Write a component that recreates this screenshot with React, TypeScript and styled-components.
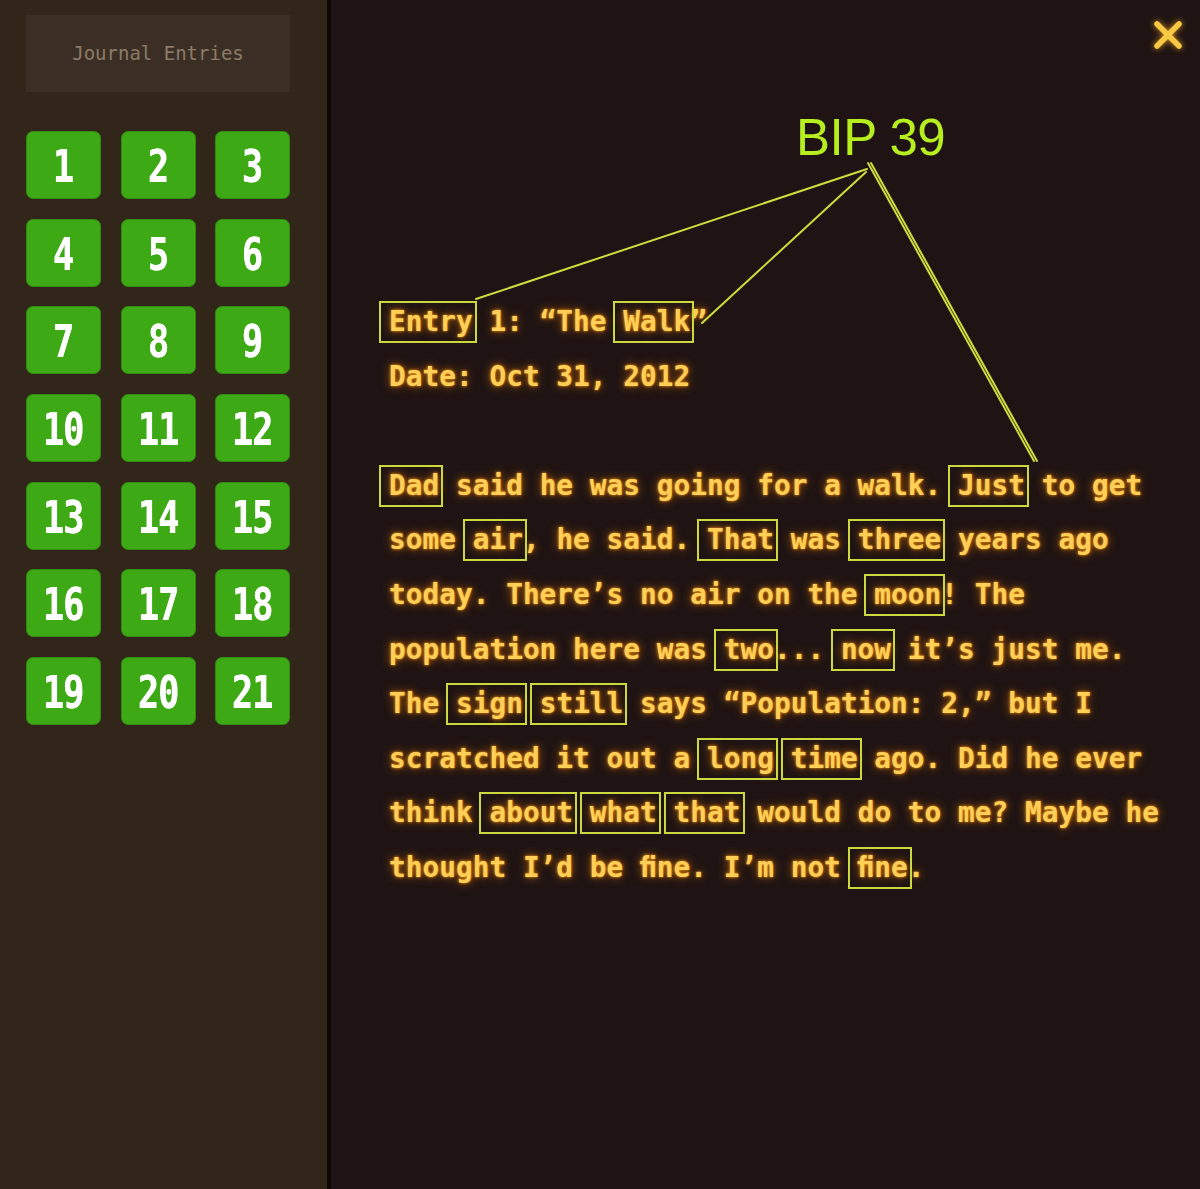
import React from "react";
import styled, { createGlobalStyle } from "styled-components";

const Global = createGlobalStyle`
  html, body { margin: 0; padding: 0; background: #1f1413; }
  * { box-sizing: border-box; }
`;

const Page = styled.div`
  display: flex;
  width: 1200px;
  height: 1189px;
  overflow: hidden;
  background: #1f1413;
`;

const Sidebar = styled.aside`
  width: 331px;
  flex: none;
  background: #32261b;
  border-right: 4px solid #0c0806;
  padding: 15px 37px 0 26px;
  display: flex;
  flex-direction: column;
`;

const SideHeader = styled.div`
  height: 77px;
  background: #3b2f25;
  display: flex;
  align-items: center;
  justify-content: center;
  font-family: "DejaVu Sans Mono", "Liberation Mono", monospace;
  font-size: 19px;
  color: #8c7b67;
  padding-bottom: 1px;
`;

const Grid = styled.div`
  margin-top: 39px;
  display: grid;
  grid-template-columns: repeat(3, 75px);
  grid-auto-rows: 68px;
  column-gap: 19.5px;
  row-gap: 19.7px;
`;

const EntryButton = styled.button`
  border: 1px solid #2f8a12;
  border-radius: 7px;
  background: #3da915;
  color: #ffffff;
  display: flex;
  align-items: center;
  justify-content: center;
  padding: 0;
  cursor: pointer;
  font-family: "DejaVu Sans Mono", "Liberation Mono", monospace;
  font-weight: 700;
  font-size: 45px;
  line-height: 1;
`;

const Digits = styled.span`
  display: inline-block;
  transform: scaleX(0.78);
  margin-top: 3px;
  letter-spacing: -1px;
  text-shadow: 0.6px 0 0 #ffffff;
`;

const Main = styled.main`
  position: relative;
  flex: 1;
  padding: 295px 0 0 58px;
`;

const CloseButton = styled.button`
  position: absolute;
  top: 19px;
  right: 16px;
  width: 32px;
  height: 32px;
  padding: 0;
  border: none;
  background: transparent;
  cursor: pointer;
  filter: drop-shadow(0 0 3px rgba(255, 170, 30, 0.8));
  svg { display: block; }
`;

const Annotation = styled.div`
  position: absolute;
  inset: 0;
  pointer-events: none;
`;

const BipLabel = styled.div`
  position: absolute;
  left: 465px;
  top: 112px;
  font-family: "Liberation Sans", Arial, sans-serif;
  font-size: 51px;
  line-height: 1;
  color: #b6ee1f;
  letter-spacing: -0.5px;
`;

const Leaders = styled.svg`
  position: absolute;
  left: 0;
  top: 0;
  width: 100%;
  height: 100%;
  overflow: visible;
`;

const Journal = styled.div`
  font-family: "DejaVu Sans Mono", "Liberation Mono", monospace;
  font-weight: 700;
  font-size: 27.8px;
  color: #ffcf58;
  text-shadow: 0 0 3px rgba(255, 160, 20, 0.95), 0 0 10px rgba(255, 130, 0, 0.7);
`;

const Line = styled.div`
  height: 54.6px;
  line-height: 54.6px;
  white-space: pre;
`;

const Marked = styled.span`
  position: relative;
  &::after {
    content: "";
    position: absolute;
    top: -4px;
    bottom: -5px;
    left: -10px;
    right: -4px;
    border: 2px solid #ccd93e;
    pointer-events: none;
  }
`;

const lines = [
  "[Entry] 1: “The [Walk]”",
  "Date: Oct 31, 2012",
  "",
  "[Dad] said he was going for a walk. [Just] to get",
  "some [air], he said. [That] was [three] years ago",
  "today. There’s no air on the [moon]! The",
  "population here was [two]... [now] it’s just me.",
  "The [sign] [still] says “Population: 2,” but I",
  "scratched it out a [long] [time] ago. Did he ever",
  "think [about] [what] [that] would do to me? Maybe he",
  "thought I’d be ﬁne. I’m not [ﬁne].",
];

function renderLine(text: string) {
  return text.split(/(\[[^\]]+\])/).map((part, i) => {
    if (part.startsWith("[") && part.endsWith("]")) {
      return <Marked key={i}>{part.slice(1, -1)}</Marked>;
    }
    return <React.Fragment key={i}>{part}</React.Fragment>;
  });
}

export default function App() {
  const entries = Array.from({ length: 21 }, (_, i) => i + 1);
  return (
    <>
      <Global />
      <Page>
        <Sidebar>
          <SideHeader>Journal Entries</SideHeader>
          <Grid>
            {entries.map((n) => (
              <EntryButton key={n}>
                <Digits>{n}</Digits>
              </EntryButton>
            ))}
          </Grid>
        </Sidebar>
        <Main>
          <Journal>
            {lines.map((l, i) => (
              <Line key={i}>{l === "" ? " " : renderLine(l)}</Line>
            ))}
          </Journal>
          <Annotation>
            <BipLabel>BIP 39</BipLabel>
            <Leaders>
              <g stroke="#cfdc3c" strokeWidth="2" fill="none" strokeLinecap="round">
                <line x1="536" y1="169" x2="145" y2="299" />
                <line x1="535" y1="172" x2="371" y2="323" />
                <line x1="537" y1="163" x2="703" y2="461" />
                <line x1="540" y1="163" x2="706" y2="461" />
              </g>
            </Leaders>
          </Annotation>
          <CloseButton aria-label="Close">
            <svg width="32" height="32" viewBox="0 0 32 32">
              <g stroke="#f7c843" strokeWidth="5.5" strokeLinecap="round">
                <line x1="5" y1="5" x2="27" y2="27" />
                <line x1="27" y1="5" x2="5" y2="27" />
              </g>
            </svg>
          </CloseButton>
        </Main>
      </Page>
    </>
  );
}
